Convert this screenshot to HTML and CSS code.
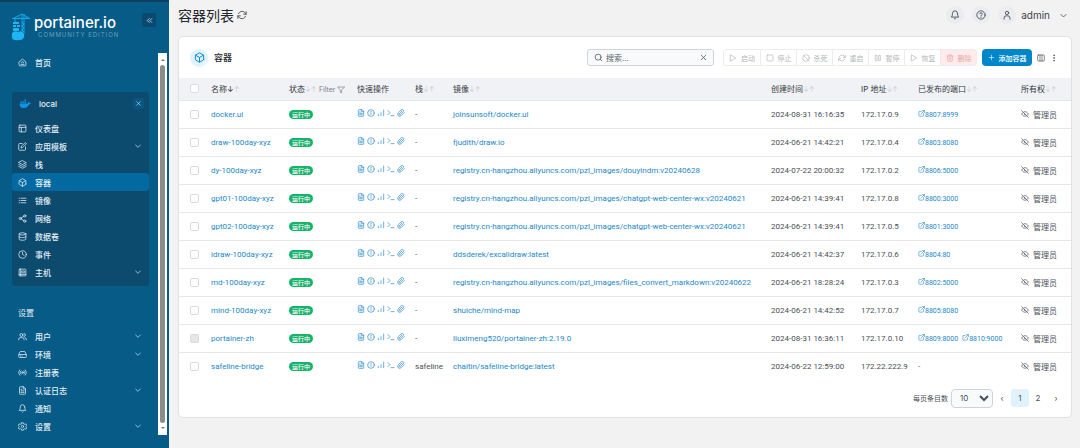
FILE: index.html
```
<!DOCTYPE html>
<html lang="zh-CN">
<head>
    <meta charset="UTF-8">
    <meta name="viewport" content="width=device-width, initial-scale=1.0">
    <title>容器列表 - Portainer</title>
    <link rel="stylesheet" href="styles.css">
</head>
<body>
    <!-- Icon sprite -->
    <svg class="sprite" aria-hidden="true">
        <symbol id="i-home" viewBox="0 0 24 24"><path d="M3 10.5 12 3l9 7.5V19a2 2 0 0 1-2 2H5a2 2 0 0 1-2-2zM8 17h8M9 13a3 3 0 0 1 6 0"/></symbol>
        <symbol id="i-layout" viewBox="0 0 24 24"><rect x="3" y="3" width="18" height="18" rx="2"/><path d="M3 9h18M9 21V9"/></symbol>
        <symbol id="i-edit" viewBox="0 0 24 24"><path d="M11 4H4a2 2 0 0 0-2 2v14a2 2 0 0 0 2 2h14a2 2 0 0 0 2-2v-7"/><path d="M18.5 2.5a2.1 2.1 0 0 1 3 3L12 15l-4 1 1-4z"/></symbol>
        <symbol id="i-layers" viewBox="0 0 24 24"><path d="m12 2 10 5-10 5L2 7zM2 12l10 5 10-5M2 17l10 5 10-5"/></symbol>
        <symbol id="i-box" viewBox="0 0 24 24"><path d="M21 16V8a2 2 0 0 0-1-1.7l-7-4a2 2 0 0 0-2 0l-7 4A2 2 0 0 0 3 8v8a2 2 0 0 0 1 1.7l7 4a2 2 0 0 0 2 0l7-4a2 2 0 0 0 1-1.7z"/><path d="m3.3 7 8.7 5 8.7-5M12 22V12"/></symbol>
        <symbol id="i-list" viewBox="0 0 24 24"><path d="M8 6h13M8 12h13M8 18h13M3 6h1M3 12h1M3 18h1"/></symbol>
        <symbol id="i-share" viewBox="0 0 24 24"><circle cx="18" cy="5" r="3"/><circle cx="6" cy="12" r="3"/><circle cx="18" cy="19" r="3"/><path d="m8.6 13.5 6.8 4M15.4 6.5l-6.8 4"/></symbol>
        <symbol id="i-database" viewBox="0 0 24 24"><ellipse cx="12" cy="5" rx="9" ry="3"/><path d="M21 12c0 1.7-4 3-9 3s-9-1.3-9-3M3 5v14c0 1.7 4 3 9 3s9-1.3 9-3V5"/></symbol>
        <symbol id="i-clock" viewBox="0 0 24 24"><circle cx="12" cy="12" r="10"/><path d="M12 6v6l4 2"/></symbol>
        <symbol id="i-host" viewBox="0 0 24 24"><rect x="3" y="3" width="18" height="18" rx="2"/><path d="M7 3v18M11 8h6v5h-6zM3 17h18"/></symbol>
        <symbol id="i-users" viewBox="0 0 24 24"><circle cx="9" cy="8" r="4"/><path d="M2 21v-2a4 4 0 0 1 4-4h6a4 4 0 0 1 4 4v2M16 4a4 4 0 0 1 0 8M22 21v-2a4 4 0 0 0-3-4"/></symbol>
        <symbol id="i-drive" viewBox="0 0 24 24"><path d="M22 12H2M5.5 5 2 12v6a2 2 0 0 0 2 2h16a2 2 0 0 0 2-2v-6l-3.5-7zM6 16h1M10 16h1"/></symbol>
        <symbol id="i-radio" viewBox="0 0 24 24"><circle cx="12" cy="12" r="2"/><path d="M16.2 7.8a6 6 0 0 1 0 8.4M7.8 16.2a6 6 0 0 1 0-8.4M19.5 5a10 10 0 0 1 0 14M4.5 19a10 10 0 0 1 0-14"/></symbol>
        <symbol id="i-file" viewBox="0 0 24 24"><path d="M14 2H6a2 2 0 0 0-2 2v16a2 2 0 0 0 2 2h12a2 2 0 0 0 2-2V8zM14 2v6h6M16 13H8M16 17H8M10 9H8"/></symbol>
        <symbol id="i-bell" viewBox="0 0 24 24"><path d="M18 8A6 6 0 0 0 6 8c0 7-3 9-3 9h18s-3-2-3-9M13.7 21a2 2 0 0 1-3.4 0"/></symbol>
        <symbol id="i-gear" viewBox="0 0 24 24"><path d="M10 2h4l1 3 3 1 3-1 2 4-2 3 2 3-2 4-3-1-3 1-1 3h-4l-1-3-3-1-3 1-2-4 2-3-2-3 2-4 3 1 3-1z"/><circle cx="12" cy="12" r="3"/></symbol>
        <symbol id="i-down" viewBox="0 0 24 24"><path d="m5 9 7 7 7-7"/></symbol>
        <symbol id="i-x" viewBox="0 0 24 24"><path d="M18 6 6 18M6 6l12 12"/></symbol>
        <symbol id="i-collapse" viewBox="0 0 24 24"><path d="m11 17-5-5 5-5M18 17l-5-5 5-5"/></symbol>
        <symbol id="i-refresh" viewBox="0 0 24 24"><path d="M22 4v6h-6M2 20v-6h6"/><path d="M3.5 9a9 9 0 0 1 14.9-3.4L22 10M2 14l3.6 4.4A9 9 0 0 0 20.5 15"/></symbol>
        <symbol id="i-help" viewBox="0 0 24 24"><circle cx="12" cy="12" r="10"/><path d="M9 9a3 3 0 0 1 6 1c0 2-3 2-3 4M12 17v1"/></symbol>
        <symbol id="i-user" viewBox="0 0 24 24"><circle cx="12" cy="7" r="4"/><path d="M5 22v-3a5 5 0 0 1 5-5h4a5 5 0 0 1 5 5v3"/></symbol>
        <symbol id="i-search" viewBox="0 0 24 24"><circle cx="11" cy="11" r="8"/><path d="m21 21-4.3-4.3"/></symbol>
        <symbol id="i-play" viewBox="0 0 24 24"><path d="m5 3 15 9-15 9z"/></symbol>
        <symbol id="i-stop" viewBox="0 0 24 24"><rect x="3" y="3" width="18" height="18" rx="2"/></symbol>
        <symbol id="i-kill" viewBox="0 0 24 24"><circle cx="12" cy="12" r="10"/><path d="m5 5 14 14"/></symbol>
        <symbol id="i-pause" viewBox="0 0 24 24"><path d="M5 4h4v16H5zM15 4h4v16h-4z"/></symbol>
        <symbol id="i-trash" viewBox="0 0 24 24"><path d="M3 6h18M19 6v14a2 2 0 0 1-2 2H7a2 2 0 0 1-2-2V6M8 6V4a2 2 0 0 1 2-2h4a2 2 0 0 1 2 2v2M10 11v6M14 11v6"/></symbol>
        <symbol id="i-plus" viewBox="0 0 24 24"><path d="M12 4v16M4 12h16"/></symbol>
        <symbol id="i-columns" viewBox="0 0 24 24"><path d="M4 3h16a2 2 0 0 1 2 2v14a2 2 0 0 1-2 2H4a2 2 0 0 1-2-2V5a2 2 0 0 1 2-2zM9 3v18M15 3v18"/></symbol>
        <symbol id="i-dots" viewBox="0 0 24 24"><circle cx="12" cy="4" r="1.5"/><circle cx="12" cy="12" r="1.5"/><circle cx="12" cy="20" r="1.5"/></symbol>
        <symbol id="i-filter" viewBox="0 0 24 24"><path d="M22 3H2l8 9.5V19l4 2v-8.5z"/></symbol>
        <symbol id="i-info" viewBox="0 0 24 24"><circle cx="12" cy="12" r="10"/><path d="M12 16v-5M12 7v1"/></symbol>
        <symbol id="i-stats" viewBox="0 0 24 24"><path d="M20 20V3M12 20v-9M4 20v-4"/></symbol>
        <symbol id="i-terminal" viewBox="0 0 24 24"><path d="m3 17 6-6-6-6M12 20h9"/></symbol>
        <symbol id="i-clip" viewBox="0 0 24 24"><path d="m21.4 11-9.2 9.2a6 6 0 0 1-8.5-8.5l9.2-9.2a4 4 0 0 1 5.7 5.7l-9.2 9.2a2 2 0 0 1-2.9-2.8L15 6"/></symbol>
        <symbol id="i-external" viewBox="0 0 24 24"><path d="M19 13v6a2 2 0 0 1-2 2H5a2 2 0 0 1-2-2V7a2 2 0 0 1 2-2h6M15 2h7v7M10 14 22 2"/></symbol>
        <symbol id="i-eye-off" viewBox="0 0 24 24"><path d="M10 5c6-1 10 3 12 7l-2 3M6 7c-2 1-3 3-4 5 3 6 10 9 16 5M14 14a3 3 0 0 1-4-4M2 2l20 20"/></symbol>
    </svg>

    <div class="layout">
        <aside class="sidebar">
            <div class="brand">
                <svg class="brand-mark" viewBox="0 0 20 28" aria-hidden="true">
                    <path class="crane" d="M1 5.500h18M3 5l8-4 7 4M11 1v20M13 1v20M11 9l2 2-2 2 2 2-2 2 2 2M4 5.500V9M8 5V4M15 5V4"/>
                    <path class="load" d="M2 9h6v2H2zM2 12h3v2H2zM6 12h3v2H6zM2 15h6v3H2z"/>
                    <path class="whale" d="M1 20q3-3 6-1 4-2 6 2 1 6-5 6-7 1-7-3z"/>
                </svg>
                <div class="brand-text">
                    <span class="brand-name">portainer.io</span>
                    <span class="brand-edition">COMMUNITY EDITION</span>
                </div>
                <button class="collapse" type="button" aria-label="收起侧边栏"><svg class="icon"><use href="#i-collapse"/></svg></button>
            </div>

            <div class="sidebar-body">
                <nav class="menu">
                    <a class="menu-item" href="#"><svg class="icon"><use href="#i-home"/></svg><span>首页</span></a>

                    <div class="environment">
                        <div class="environment-head">
                            <svg class="docker" viewBox="0 0 24 18" aria-hidden="true"><path d="M1 9h17c0-2 0-3 2-4 1 1 1 2 1 3h3c-1 3-3 3-4 3-2 5-6 7-11 7-6 0-8-4-8-9zM3 5h3v3H3zM7 5h3v3H7zM11 5h3v3h-3zM11 1h3v3h-3z"/></svg>
                            <span>local</span>
                            <button class="close" type="button" aria-label="断开环境"><svg class="icon"><use href="#i-x"/></svg></button>
                        </div>
                        <a class="menu-item" href="#"><svg class="icon"><use href="#i-layout"/></svg><span>仪表盘</span></a>
                        <a class="menu-item" href="#"><svg class="icon"><use href="#i-edit"/></svg><span>应用模板</span><svg class="icon chevron"><use href="#i-down"/></svg></a>
                        <a class="menu-item" href="#"><svg class="icon"><use href="#i-layers"/></svg><span>栈</span></a>
                        <a class="menu-item active" href="#"><svg class="icon"><use href="#i-box"/></svg><span>容器</span></a>
                        <a class="menu-item" href="#"><svg class="icon"><use href="#i-list"/></svg><span>镜像</span></a>
                        <a class="menu-item" href="#"><svg class="icon"><use href="#i-share"/></svg><span>网络</span></a>
                        <a class="menu-item" href="#"><svg class="icon"><use href="#i-database"/></svg><span>数据卷</span></a>
                        <a class="menu-item" href="#"><svg class="icon"><use href="#i-clock"/></svg><span>事件</span></a>
                        <a class="menu-item" href="#"><svg class="icon"><use href="#i-host"/></svg><span>主机</span><svg class="icon chevron"><use href="#i-down"/></svg></a>
                    </div>

                    <div class="menu-title">设置</div>
                    <a class="menu-item" href="#"><svg class="icon"><use href="#i-users"/></svg><span>用户</span><svg class="icon chevron"><use href="#i-down"/></svg></a>
                    <a class="menu-item" href="#"><svg class="icon"><use href="#i-drive"/></svg><span>环境</span><svg class="icon chevron"><use href="#i-down"/></svg></a>
                    <a class="menu-item" href="#"><svg class="icon"><use href="#i-radio"/></svg><span>注册表</span></a>
                    <a class="menu-item" href="#"><svg class="icon"><use href="#i-file"/></svg><span>认证日志</span><svg class="icon chevron"><use href="#i-down"/></svg></a>
                    <a class="menu-item" href="#"><svg class="icon"><use href="#i-bell"/></svg><span>通知</span></a>
                    <a class="menu-item" href="#"><svg class="icon"><use href="#i-gear"/></svg><span>设置</span><svg class="icon chevron"><use href="#i-down"/></svg></a>
                </nav>
                <div class="scrollbar" aria-hidden="true">
                    <span class="arrow-up"></span>
                    <span class="thumb"></span>
                    <span class="arrow-down"></span>
                </div>
            </div>
        </aside>

        <main class="content">
            <header class="page-header">
                <h1>容器列表</h1>
                <button class="plain" type="button" aria-label="刷新"><svg class="icon"><use href="#i-refresh"/></svg></button>
                <div class="user-area">
                    <button class="round" type="button" aria-label="通知"><svg class="icon"><use href="#i-bell"/></svg></button>
                    <button class="round" type="button" aria-label="帮助"><svg class="icon"><use href="#i-help"/></svg></button>
                    <button class="user" type="button">
                        <span class="round"><svg class="icon"><use href="#i-user"/></svg></span>
                        <span>admin</span>
                        <svg class="icon user-chevron"><use href="#i-down"/></svg>
                    </button>
                </div>
            </header>

            <section class="card">
                <div class="toolbar">
                    <span class="badge-icon"><svg class="icon"><use href="#i-box"/></svg></span>
                    <h2>容器</h2>
                    <div class="search">
                        <svg class="icon"><use href="#i-search"/></svg>
                        <input type="text" placeholder="搜索..." aria-label="搜索">
                        <button class="plain" type="button" aria-label="清除"><svg class="icon"><use href="#i-x"/></svg></button>
                    </div>
                    <div class="actions">
                        <button type="button" disabled><svg class="icon"><use href="#i-play"/></svg>启动</button>
                        <button type="button" disabled><svg class="icon"><use href="#i-stop"/></svg>停止</button>
                        <button type="button" disabled><svg class="icon"><use href="#i-kill"/></svg>杀死</button>
                        <button type="button" disabled><svg class="icon"><use href="#i-refresh"/></svg>重启</button>
                        <button type="button" disabled><svg class="icon"><use href="#i-pause"/></svg>暂停</button>
                        <button type="button" disabled><svg class="icon"><use href="#i-play"/></svg>恢复</button>
                        <button class="danger" type="button" disabled><svg class="icon"><use href="#i-trash"/></svg>删除</button>
                    </div>
                    <button class="add" type="button"><svg class="icon"><use href="#i-plus"/></svg>添加容器</button>
                    <button class="plain tool" type="button" aria-label="列"><svg class="icon"><use href="#i-columns"/></svg></button>
                    <button class="plain tool" type="button" aria-label="更多"><svg class="icon"><use href="#i-dots"/></svg></button>
                </div>

                <table class="containers">
                    <colgroup>
                        <col class="col-check"><col class="col-name"><col class="col-state"><col class="col-quick"><col class="col-stack">
                        <col><col class="col-created"><col class="col-ip"><col class="col-ports"><col class="col-owner">
                    </colgroup>
                    <thead>
                        <tr>
                            <th><input type="checkbox" aria-label="全选"></th>
                            <th>名称<span class="sorted">↓</span><span class="sort">↑</span></th>
                            <th>状态<span class="sort">↓↑</span> <button class="filter" type="button">Filter <svg class="icon"><use href="#i-filter"/></svg></button></th>
                            <th>快速操作</th>
                            <th>栈<span class="sort">↓↑</span></th>
                            <th>镜像<span class="sort">↓↑</span></th>
                            <th>创建时间<span class="sort">↓↑</span></th>
                            <th>IP 地址<span class="sort">↓↑</span></th>
                            <th>已发布的端口<span class="sort">↓↑</span></th>
                            <th>所有权<span class="sort">↓↑</span></th>
                        </tr>
                    </thead>
                    <tbody id="containerRows"></tbody>
                </table>

                <div class="pagination">
                    <label for="pageSize">每页条目数</label>
                    <select id="pageSize">
                        <option>10</option>
                        <option>25</option>
                        <option>50</option>
                    </select>
                    <button class="page" type="button" aria-label="上一页">‹</button>
                    <button class="page current" type="button">1</button>
                    <button class="page" type="button">2</button>
                    <button class="page" type="button" aria-label="下一页">›</button>
                </div>
            </section>
        </main>
    </div>

    <script src="containers.js"></script>
</body>
</html>
```
FILE: styles.css
```
* { box-sizing: border-box; }
body {
    margin: 0;
    background-color: #f2f2f2;
    color: #4a4f57;
    font-family: Inter, "Noto Sans CJK SC", sans-serif;
    font-size: 8px;
}
a { color: #2388c8; text-decoration: none; }
a:hover { text-decoration: underline; }
button, input, select { margin: 0; font: inherit; color: inherit; }
button { padding: 0; border: 0; background: none; cursor: pointer; }
h1, h2 { margin: 0; font-weight: 400; }
.sprite { display: none; }
.icon {
    width: 9px;
    height: 9px;
    flex: none;
    fill: none;
    stroke: currentColor;
    stroke-width: 2;
    stroke-linecap: round;
    stroke-linejoin: round;
}
.layout { display: flex; min-height: 100vh; }

/* Sidebar */
.sidebar {
    display: flex;
    flex-direction: column;
    width: 169px;
    flex: none;
    border-top: 2px solid #0c3f60;
    background-color: #065b87;
    color: #e3eef5;
}
.brand {
    display: flex;
    align-items: flex-start;
    height: 51px;
    padding: 11px 13px 0 11px;
}
.brand-mark { width: 20px; height: 28px; }
.crane { fill: none; stroke: #13a9ea; stroke-width: 1; }
.load, .whale { fill: #1fb5f2; }
.brand-text { display: flex; flex-direction: column; flex: 1; padding-left: 3px; }
.brand-name { font-size: 15px; line-height: 19px; font-weight: 500; color: #fff; }
.brand-edition { padding-left: 4px; font-size: 6px; line-height: 5px; letter-spacing: 1px; color: #6d9fbb; white-space: nowrap; }
.collapse {
    display: grid;
    place-items: center;
    width: 14px;
    height: 14px;
    border-radius: 2px;
    background-color: #0b4a70;
}
.sidebar-body { display: flex; justify-content: space-between; padding-right: 2px; }
.menu { width: 149px; padding-left: 12px; }
.menu-item {
    display: flex;
    align-items: center;
    gap: 8px;
    height: 18px;
    padding: 0 7px 0 6px;
    border-radius: 3px;
    color: #e3eef5;
    font-weight: 500;
}
.chevron { width: 8px; height: 8px; margin-left: auto; }
.active { background-color: #0369a1; }
.environment {
    margin: 21px 0 19px;
    padding-bottom: 5px;
    border-radius: 3px;
    background-color: #0c4a6e;
}
.environment-head {
    display: flex;
    align-items: center;
    gap: 8px;
    height: 27px;
    padding: 0 5px 4px 7px;
    font-size: 8px;
    font-weight: 500;
}
.docker { width: 12px; height: 9px; fill: #0d93e8; }
.close {
    display: grid;
    place-items: center;
    width: 11px;
    height: 11px;
    margin-left: auto;
    border-radius: 2px;
    background-color: #0b5680;
}
.close .icon { width: 7px; height: 7px; }
.menu-title { padding: 0 6px; margin-bottom: 6px; line-height: 16px; }
.scrollbar {
    display: flex;
    flex-direction: column;
    align-items: center;
    gap: 4px;
    width: 9px;
    padding: 6px 0;
    background-color: #fff;
}
.thumb { flex: 1; width: 5px; border-radius: 3px; background-color: #8c8c8c; }
.arrow-up, .arrow-down { border: 2px solid transparent; }
.arrow-up { border-top: 0; border-bottom-color: #7a7a7a; }
.arrow-down { border-bottom: 0; border-top-color: #7a7a7a; }

/* Page header */
.content { flex: 1; min-width: 0; padding: 0 8px 0 9px; }
.page-header { display: flex; align-items: center; gap: 3px; height: 30px; color: #3d434c; }
.page-header h1 { font-size: 14px; color: #23272e; }
.plain { display: grid; place-items: center; }
.page-header > .plain .icon { width: 10px; height: 10px; }
.user-area { display: flex; align-items: center; gap: 8px; margin-left: auto; padding-right: 4px; }
.round {
    display: grid;
    place-items: center;
    width: 18px;
    height: 18px;
    border-radius: 50%;
    background-color: #eaecef;
}
.round .icon { width: 10px; height: 10px; }
.user { display: flex; align-items: center; gap: 5px; font-size: 10px; }
.user-chevron { margin-left: 4px; }

/* Containers card */
.card {
    margin-top: 6px;
    border: 1px solid #dfe1e4;
    border-radius: 5px;
    background-color: #fff;
}
.toolbar { display: flex; align-items: center; height: 41px; padding: 0 13px 0 11px; }
.badge-icon {
    display: grid;
    place-items: center;
    width: 18px;
    height: 18px;
    border-radius: 50%;
    background-color: #e0f2fe;
    color: #0086c9;
}
.badge-icon .icon { width: 11px; height: 11px; }
.toolbar h2 { padding-left: 6px; font-size: 9px; font-weight: 500; color: #23272e; }
.search {
    display: flex;
    align-items: center;
    gap: 3px;
    width: 127px;
    height: 17px;
    margin-left: auto;
    padding: 0 5px 0 6px;
    border: 1px solid #d0d4da;
    border-radius: 3px;
    background-color: #f9fafb;
}
.search input { flex: 1; min-width: 0; padding: 0; border: 0; outline: 0; background: none; }
.search input::placeholder { color: #5f6670; }
.actions {
    display: flex;
    margin: 0 5px 0 9px;
    border: 1px solid #ececee;
    border-radius: 3px;
}
.actions button {
    display: flex;
    align-items: center;
    justify-content: center;
    gap: 4px;
    width: 36px;
    height: 15px;
    font-size: 7px;
    color: #b2b5ba;
    cursor: default;
}
.actions button + button { border-left: 1px solid #ececee; }
.actions .icon { width: 8px; height: 8px; }
.actions .danger { background-color: #fdeceb; color: #e9a5a0; }
.add {
    display: flex;
    align-items: center;
    justify-content: center;
    gap: 4px;
    width: 50px;
    height: 17px;
    border-radius: 4px;
    background-color: #0086c9;
    color: #fff;
    font-size: 7px;
    font-weight: 500;
}
.add .icon { width: 7px; height: 7px; }
.tool { margin-left: 5px; }
.tool .icon { width: 8px; height: 8px; }

.containers { width: 100%; border-collapse: collapse; table-layout: fixed; }
.col-check { width: 32px; }
.col-name { width: 78px; }
.col-state { width: 68px; }
.col-quick { width: 58px; }
.col-stack { width: 38px; }
.col-created { width: 90px; }
.col-ip { width: 57px; }
.col-ports { width: 103px; }
.col-owner { width: 50px; }
.containers th, .containers td { padding: 0; text-align: left; white-space: nowrap; font-weight: 400; }
.containers th { height: 22px; background-color: #f1f2f5; color: #343a42; }
.containers td {
    height: 28px;
    border-top: 1px solid #e6e7ea;
    font-family: Roboto, "Noto Sans CJK SC", sans-serif;
}
.containers input {
    display: block;
    appearance: none;
    width: 9px;
    height: 9px;
    margin-left: 11px;
    border: 1px solid #d9dbdf;
    border-radius: 2px;
    background-color: #fff;
}
.containers input:disabled { background-color: #e6e6e6; }
.sort { font-size: 7px; color: #cdd0d5; }
.filter { color: #7a8089; font-size: 7px; }
.filter .icon { width: 8px; height: 8px; vertical-align: middle; }
.state {
    display: block;
    width: 24px;
    height: 9px;
    border-radius: 5px;
    background-color: #17b26a;
    color: #fff;
    font-size: 6px;
    line-height: 9px;
    font-weight: 500;
    text-align: center;
}
.quick { display: flex; gap: 2px; padding-bottom: 3px; }
.quick a { display: grid; }
.quick .icon { width: 8px; height: 8px; }
.port { margin-right: 4px; font-size: 7px; }
.port .icon { width: 7px; height: 7px; }
.owner { display: flex; align-items: center; gap: 4px; }
.owner .icon { width: 8px; height: 8px; }

.pagination {
    display: flex;
    align-items: center;
    justify-content: flex-end;
    height: 37px;
    padding: 0 6px 1px 0;
}
.pagination label { padding-right: 3px; font-size: 7px; }
.pagination select {
    width: 42px;
    height: 19px;
    padding-left: 4px;
    border: 1px solid #cfd3d9;
    border-radius: 4px;
    background-color: #f9fafb;
}
.page { width: 18px; height: 18px; border-radius: 3px; }
.current { background-color: #e0f2fe; }
```
FILE: containers.js
```
const containers = [
    { name: 'docker.ui', stack: '-', image: 'joinsunsoft/docker.ui', created: '2024-08-31 16:16:35', ip: '172.17.0.9', ports: ['8807:8999'] },
    { name: 'draw-100day-xyz', stack: '-', image: 'fjudith/draw.io', created: '2024-06-21 14:42:21', ip: '172.17.0.4', ports: ['8803:8080'] },
    { name: 'dy-100day-xyz', stack: '-', image: 'registry.cn-hangzhou.aliyuncs.com/pzl_images/douyindm:v20240628', created: '2024-07-22 20:00:32', ip: '172.17.0.2', ports: ['8806:5000'] },
    { name: 'gpt01-100day-xyz', stack: '-', image: 'registry.cn-hangzhou.aliyuncs.com/pzl_images/chatgpt-web-center-wx:v20240621', created: '2024-06-21 14:39:41', ip: '172.17.0.8', ports: ['8800:3000'] },
    { name: 'gpt02-100day-xyz', stack: '-', image: 'registry.cn-hangzhou.aliyuncs.com/pzl_images/chatgpt-web-center-wx:v20240621', created: '2024-06-21 14:39:41', ip: '172.17.0.5', ports: ['8801:3000'] },
    { name: 'idraw-100day-xyz', stack: '-', image: 'ddsderek/excalidraw:latest', created: '2024-06-21 14:42:37', ip: '172.17.0.6', ports: ['8804:80'] },
    { name: 'md-100day-xyz', stack: '-', image: 'registry.cn-hangzhou.aliyuncs.com/pzl_images/files_convert_markdown:v20240622', created: '2024-06-21 18:28:24', ip: '172.17.0.3', ports: ['8802:5000'] },
    { name: 'mind-100day-xyz', stack: '-', image: 'shuiche/mind-map', created: '2024-06-21 14:42:52', ip: '172.17.0.7', ports: ['8805:8080'] },
    { name: 'portainer-zh', stack: '-', image: 'liuximeng520/portainer-zh:2.19.0', created: '2024-08-31 16:36:11', ip: '172.17.0.10', ports: ['8809:8000', '8810:9000'], locked: true },
    { name: 'safeline-bridge', stack: 'safeline', image: 'chaitin/safeline-bridge:latest', created: '2024-06-22 12:59:00', ip: '172.22.222.9', ports: [] }
];

const quickActions = [
    ['file', '日志'],
    ['info', '详情'],
    ['stats', '统计'],
    ['terminal', '控制台'],
    ['clip', '附加']
];

function icon(name) {
    return `<svg class="icon"><use href="#i-${name}"/></svg>`;
}

function renderRow(c) {
    const quick = quickActions.map(([name, label]) => `<a href="#" aria-label="${label}">${icon(name)}</a>`).join('');
    const ports = c.ports.map(p => `<a class="port" href="#">${icon('external')}${p}</a>`).join('') || '-';
    return `<tr>
        <td><input type="checkbox" aria-label="${c.name}" ${c.locked ? 'disabled' : ''}></td>
        <td><a href="#">${c.name}</a></td>
        <td><span class="state">运行中</span></td>
        <td><div class="quick">${quick}</div></td>
        <td>${c.stack}</td>
        <td><a href="#">${c.image}</a></td>
        <td>${c.created}</td>
        <td>${c.ip}</td>
        <td>${ports}</td>
        <td><div class="owner">${icon('eye-off')}管理员</div></td>
    </tr>`;
}

document.getElementById('containerRows').innerHTML = containers.map(renderRow).join('');
```
